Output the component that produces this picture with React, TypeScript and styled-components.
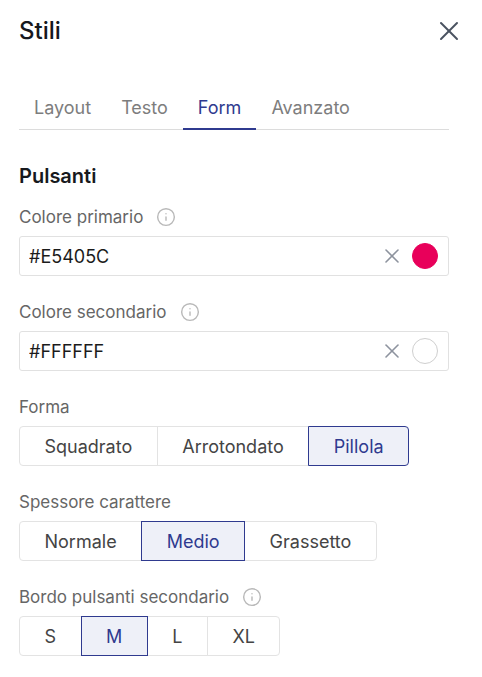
import React, { useState } from 'react';
import styled, { createGlobalStyle } from 'styled-components';
import { X, Info } from 'lucide-react';

const GlobalStyle = createGlobalStyle`
  body {
    margin: 0;
    background: #ffffff;
    font-family: Inter, "Noto Sans", Arial, sans-serif;
  }
  * { box-sizing: border-box; }
`

const Panel = styled.div`
  padding: 16px 17px 24px 19px;
  width: 482px;
`
const Header = styled.div`
  display: flex;
  align-items: center;
  justify-content: space-between;
  height: 30px;
`
const Title = styled.h1`
  margin: 0;
  font-size: 24px;
  line-height: 30px;
  font-weight: 500;
  color: #16181d;
`
const CloseButton = styled.button`
  width: 32px;
  height: 32px;
  padding: 0;
  border: 0;
  background: none;
  color: #4a5260;
  display: flex;
  align-items: center;
  justify-content: center;
  cursor: pointer;
`
const Body = styled.div`
  width: 430px;
`
const TabList = styled.div`
  display: flex;
  margin-top: 50px;
  border-bottom: 1px solid #dcdcdc;
`
const Tab = styled.button<{ $active?: boolean }>`
  padding: 0 15px 8px;
  margin-bottom: -1px;
  border: 0;
  border-bottom: 2px solid ${p => (p.$active ? '#2f3a8f' : 'transparent')};
  background: none;
  font-family: inherit;
  font-size: 18px;
  line-height: 24px;
  font-weight: 400;
  color: ${p => (p.$active ? '#2f3a8f' : '#7d7d7d')};
  cursor: pointer;
`
const SectionTitle = styled.h2`
  margin: 32px 0 15px;
  font-size: 20px;
  line-height: 28px;
  font-weight: 600;
  color: #17191d;
`
const Field = styled.div`
  display: flex;
  flex-direction: column;
  align-items: flex-start;
  & + & {
    margin-top: 24px;
  }
`
const Label = styled.div`
  display: flex;
  align-items: center;
  gap: 13px;
  height: 24px;
  margin-bottom: 7px;
  font-size: 17px;
  line-height: 24px;
  color: #666666;
`
const InfoIcon = styled.span`
  display: flex;
  color: #b9b9b9;
`
const ColorInput = styled.div`
  display: flex;
  align-items: center;
  width: 100%;
  height: 40px;
  padding: 0 10px 0 9px;
  border: 1px solid #e1e1e1;
  border-radius: 3px;
`
const ColorText = styled.input`
  flex: 1;
  min-width: 0;
  border: 0;
  outline: none;
  padding: 0;
  font-family: inherit;
  font-size: 18px;
  color: #1b1b1b;
  background: transparent;
`
const ClearButton = styled.button`
  width: 24px;
  height: 24px;
  padding: 0;
  margin-right: 8px;
  border: 0;
  background: none;
  color: #8d939e;
  display: flex;
  align-items: center;
  justify-content: center;
`
const Swatch = styled.span<{ $color: string }>`
  width: 26px;
  height: 26px;
  border-radius: 50%;
  background: ${p => p.$color};
  border: 1px solid ${p => (p.$color === '#FFFFFF' ? '#cfcfcf' : p.$color)};
`
const Segmented = styled.div`
  display: inline-flex;
`
const Segment = styled.button<{ $active?: boolean }>`
  position: relative;
  height: 40px;
  padding: 0 24.5px;
  margin-left: -1px;
  border: 1px solid ${p => (p.$active ? '#2f3a8f' : '#e3e3e3')};
  background: ${p => (p.$active ? '#eef0f8' : '#ffffff')};
  color: ${p => (p.$active ? '#2f3a8f' : '#444444')};
  z-index: ${p => (p.$active ? 1 : 0)};
  font-family: inherit;
  font-size: 18px;
  font-weight: 400;
  cursor: pointer;
  &:first-child {
    margin-left: 0;
    border-radius: 4px 0 0 4px;
  }
  &:last-child {
    border-radius: 0 4px 4px 0;
  }
`

type SegProps = {
  options: string[],
  value: string,
  onChange: (v: string) => void,
}

const SegmentGroup = ({ options, value, onChange }: SegProps) => (
  <Segmented>
    {options.map(o => (
      <Segment key={o} $active={o === value} onClick={() => onChange(o)}>{o}</Segment>
    ))}
  </Segmented>
)

const FieldLabel = ({ text, info }: { text: string, info?: boolean }) => (
  <Label>
    {text}
    {info && <InfoIcon><Info size={20} strokeWidth={1.7} /></InfoIcon>}
  </Label>
)

export default function App() {
  const [tab, setTab] = useState('Form')
  const [primary, setPrimary] = useState('#E5405C')
  const [secondary, setSecondary] = useState('#FFFFFF')
  const [shape, setShape] = useState('Pillola')
  const [weight, setWeight] = useState('Medio')
  const [border, setBorder] = useState('M')

  return (
    <Panel>
      <GlobalStyle />
      <Header>
        <Title>Stili</Title>
        <CloseButton aria-label="Chiudi"><X size={32} strokeWidth={1.5} /></CloseButton>
      </Header>
      <Body>
        <TabList>
          {['Layout', 'Testo', 'Form', 'Avanzato'].map(t => (
            <Tab key={t} $active={t === tab} onClick={() => setTab(t)}>{t}</Tab>
          ))}
        </TabList>

        <SectionTitle>Pulsanti</SectionTitle>

        <Field>
          <FieldLabel text="Colore primario" info />
          <ColorInput>
            <ColorText value={primary} onChange={e => setPrimary(e.target.value)} />
            <ClearButton><X size={24} strokeWidth={1.6} /></ClearButton>
            <Swatch $color="#E8005A" />
          </ColorInput>
        </Field>

        <Field>
          <FieldLabel text="Colore secondario" info />
          <ColorInput>
            <ColorText value={secondary} onChange={e => setSecondary(e.target.value)} />
            <ClearButton><X size={24} strokeWidth={1.6} /></ClearButton>
            <Swatch $color="#FFFFFF" />
          </ColorInput>
        </Field>

        <Field>
          <FieldLabel text="Forma" />
          <SegmentGroup options={['Squadrato', 'Arrotondato', 'Pillola']} value={shape} onChange={setShape} />
        </Field>

        <Field>
          <FieldLabel text="Spessore carattere" />
          <SegmentGroup options={['Normale', 'Medio', 'Grassetto']} value={weight} onChange={setWeight} />
        </Field>

        <Field>
          <FieldLabel text="Bordo pulsanti secondario" info />
          <SegmentGroup options={['S', 'M', 'L', 'XL']} value={border} onChange={setBorder} />
        </Field>
      </Body>
    </Panel>
  )
}
